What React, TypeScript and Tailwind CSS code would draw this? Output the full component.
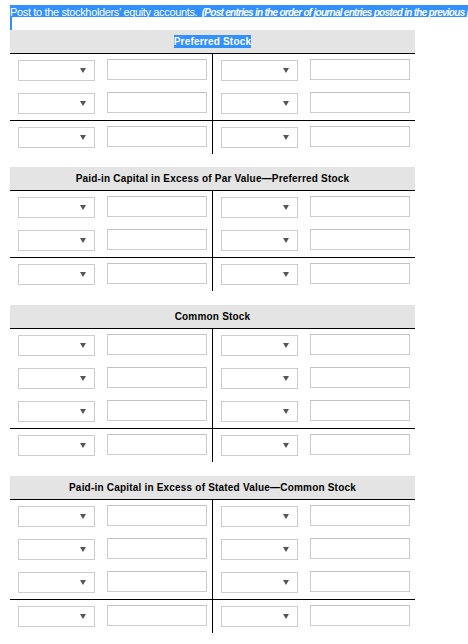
import React from "react";

type Ledger = {
  title: string;
  rows: number;
  gap: string;
  selected?: boolean;
};

const ledgers: Ledger[] = [
  { title: "Preferred Stock", rows: 3, gap: "mt-0", selected: true },
  { title: "Paid-in Capital in Excess of Par Value\u2014Preferred Stock", rows: 3, gap: "mt-[13px]" },
  { title: "Common Stock", rows: 4, gap: "mt-[14px]" },
  { title: "Paid-in Capital in Excess of Stated Value\u2014Common Stock", rows: 4, gap: "mt-[14px]" },
];

function Dropdown() {
  return (
    <div className="relative mt-[6px] h-[21px] w-[77px] border border-[#cccccc] bg-white">
      <span className="absolute right-[8px] top-[7px] h-0 w-0 border-l-[3px] border-r-[3px] border-t-[5px] border-l-transparent border-r-transparent border-t-[#555555]" />
    </div>
  );
}

function Amount() {
  return <div className="mt-[5px] h-[21px] w-[100px] border border-[#cccccc] border-t-[#c2c2c2] bg-white" />;
}

function Side({ left }: { left?: boolean }) {
  return (
    <div
      className={
        left
          ? "flex h-full w-[203px] items-start gap-[12px] border-r border-black pl-[8px]"
          : "flex h-full w-[202px] items-start gap-[12px] pl-[8px]"
      }
    >
      <Dropdown />
      <Amount />
    </div>
  );
}

function TAccount({ title, rows, gap, selected }: Ledger) {
  return (
    <div className={gap}>
      <div className="flex h-[24px] items-center justify-center border-b border-black bg-[#e4e4e4]">
        <span
          className={
            selected
              ? "bg-[#3390ff] text-[10px] font-bold leading-[13px] tracking-[0.2px] text-white"
              : "text-[10px] font-bold leading-[13px] tracking-[0.2px] text-black"
          }
        >
          {title}
        </span>
      </div>
      {Array.from({ length: rows }).map((_, i) => (
        <div
          key={i}
          className={i === rows - 1 ? "flex h-[34px] border-t border-black" : "flex h-[33px]"}
        >
          <Side left />
          <Side />
        </div>
      ))}
    </div>
  );
}

export default function App() {
  return (
    <div className="relative h-[644px] w-[468px] overflow-hidden bg-white font-['Liberation_Sans',Arial,sans-serif]">
      <div className="pt-[5px]">
        <div className="ml-[10px] h-[12px] whitespace-nowrap bg-[#3390ff] leading-[12px] text-white">
          <span className="text-[11px] tracking-[-0.35px]">Post to the stockholders’ equity accounts.</span>{" "}
          <span className="text-[10px] font-bold italic tracking-[-0.72px]">
            (Post entries in the order of journal entries posted in the previous part.)
          </span>
        </div>
        <div className="ml-[10px] h-[13px] w-[2px] bg-[#3390ff]" />
      </div>
      <div className="ml-[10px] w-[405px] font-['Tahoma','Liberation_Sans',sans-serif]">
        {ledgers.map((l) => (
          <TAccount key={l.title} {...l} />
        ))}
      </div>
    </div>
  );
}
